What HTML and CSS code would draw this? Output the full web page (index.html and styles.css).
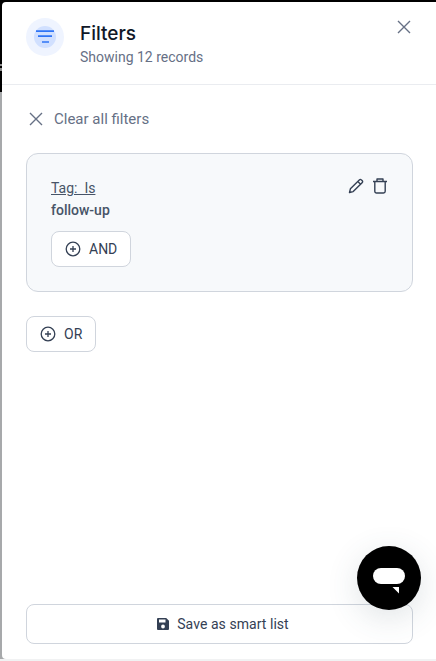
FILE: index.html
```html
<!DOCTYPE html>
<html lang="en">
<head>
<meta charset="utf-8">
<title>Filters</title>
<link rel="stylesheet" href="styles.css">
</head>
<body>
<aside class="panel">
  <header class="head">
    <div class="badge">
      <div class="badge-inner">
        <svg width="18" height="14" viewBox="0 0 18 14" fill="none" stroke="#2f74f6" stroke-width="1.7"><path d="M0 1.2h18M2 6.2h14M6 12h7"/></svg>
      </div>
    </div>
    <div class="titles">
      <h1 class="title">Filters</h1>
      <p class="subtitle">Showing 12 records</p>
    </div>
    <button class="close" aria-label="Close">
      <svg width="14" height="14" viewBox="0 0 14 14" fill="none" stroke="#667085" stroke-width="1.4"><path d="M1 1l12 12M13 1L1 13"/></svg>
    </button>
  </header>
  <main class="body">
    <button class="clear">
      <svg width="14" height="14" viewBox="0 0 14 14" fill="none" stroke="#667085" stroke-width="1.4"><path d="M1 1l12 12M13 1L1 13"/></svg>
      <span>Clear all filters</span>
    </button>
    <section class="group">
      <div class="cond">
        <div class="cond-text">
          <a class="cond-label" href="#">Tag:&nbsp; Is</a>
          <div class="cond-value">follow-up</div>
        </div>
        <div class="cond-actions">
          <svg width="16" height="16" viewBox="0 0 16 16" fill="none" stroke="#344054" stroke-width="1.4" stroke-linejoin="round"><path d="M1.5 14.5l.9-3.7L11.3 1.9a1.5 1.5 0 0 1 2.1 0l.7.7a1.5 1.5 0 0 1 0 2.1L5.2 13.6zM9.8 3.4l2.8 2.8"/></svg>
          <svg width="14" height="16" viewBox="0 0 14 16" fill="none" stroke="#344054" stroke-width="1.4" stroke-linejoin="round"><path d="M0 3.5h14M4 3.5V1h6v2.5M1.8 3.500v9.800a1.700 1.700 0 0 0 1.700 1.700h7a1.700 1.700 0 0 0 1.700-1.700V3.500"/></svg>
        </div>
      </div>
      <button class="btn btn-and">
        <svg width="16" height="16" viewBox="0 0 16 16" fill="none" stroke="#344054" stroke-width="1.3"><circle cx="8" cy="8" r="6.8"/><path d="M8 5v6M5 8h6"/></svg>
        <span>AND</span>
      </button>
    </section>
    <button class="btn btn-or">
      <svg width="16" height="16" viewBox="0 0 16 16" fill="none" stroke="#344054" stroke-width="1.3"><circle cx="8" cy="8" r="6.8"/><path d="M8 5v6M5 8h6"/></svg>
      <span>OR</span>
    </button>
  </main>
  <footer class="foot">
    <button class="save">
      <svg width="14" height="14" viewBox="0 0 14 14"><path fill="#344054" fill-rule="evenodd" d="M2 1h8.200L13 3.800V12a1 1 0 0 1-1 1H2a1 1 0 0 1-1-1V2a1 1 0 0 1 1-1zm1 1.600v2.800h6.500V2.600zM7 7.600a1.900 1.900 0 1 0 0 3.800 1.900 1.900 0 0 0 0-3.800z"/></svg>
      <span>Save as smart list</span>
    </button>
  </footer>
  <button class="chat" aria-label="Chat">
    <svg width="32" height="32" viewBox="0 0 32 32"><rect x="0" y="6" width="32" height="16" rx="8" fill="#fff"/><path d="M19.500 25h6.500v6.500z" fill="#fff"/></svg>
  </button>
</aside>
</body>
</html>
```
FILE: styles.css
```css
* { box-sizing: border-box; }
html, body { height: 100%; }
body {
  margin: 0;
  padding: 2px 0 2px 2px;
  background: linear-gradient(#000 0 64px, #8a8a8a 64px 66px, #000 66px 68px, #8a8a8a 68px 71px, #000 71px 92px, #a7a9ab 92px 100%);
  background-repeat: no-repeat;
  overflow: hidden;
  font-family: Roboto, "Liberation Sans", sans-serif;
  position: relative;
}
body::after {
  content: "";
  position: absolute;
  left: 0;
  right: 0;
  bottom: 0;
  height: 2px;
  background: #f1f2f3;
}
.panel {
  height: 100%;
  background: #fff;
  border-radius: 4px 0 0 4px;
  display: flex;
  flex-direction: column;
  position: relative;
}
button { font-family: inherit; cursor: pointer; }
.head {
  height: 83px;
  flex: none;
  border-bottom: 1px solid #eaecf0;
  display: flex;
  align-items: flex-start;
  padding: 16px 24px;
  gap: 16px;
}
.badge {
  width: 38px;
  height: 38px;
  border-radius: 50%;
  background: #eff4ff;
  display: flex;
  align-items: center;
  justify-content: center;
  flex: none;
}
.badge-inner {
  width: 22px;
  height: 22px;
  border-radius: 50%;
  background: #d1e0ff;
  display: flex;
  align-items: center;
  justify-content: center;
  overflow: visible;
}
.badge-inner svg { flex: none; }
.titles { flex: 1; padding-top: 4px; }
.title {
  margin: 0;
  font: 500 19px/24px Inter, sans-serif;
  color: #101828;
}
.subtitle {
  margin: 2px 0 0;
  font-size: 14px;
  line-height: 18px;
  color: #667085;
}
.close {
  border: 0;
  background: none;
  padding: 0;
  margin: 2px 1px 0 0;
  line-height: 0;
}
.body { flex: 1; padding: 0 23px 0 24px; display: flex; flex-direction: column; align-items: flex-start; }
.clear {
  border: 0;
  background: none;
  padding: 0 0 0 3px;
  margin-top: 25px;
  height: 18px;
  display: flex;
  align-items: center;
  gap: 11px;
  font-size: 15px;
  font-weight: 400;
  color: #667085;
}
.group {
  margin-top: 25px;
  width: 100%;
  height: 139px;
  border: 1px solid #d0d5dd;
  border-radius: 12px;
  background: #f7f9fb;
  padding: 24px;
}
.cond { display: flex; justify-content: space-between; align-items: flex-start; }
.cond-label {
  display: block;
  font-size: 14px;
  line-height: 20px;
  color: #475467;
  text-decoration: underline;
}
.cond-value {
  margin-top: 2px;
  font-size: 14px;
  line-height: 20px;
  font-weight: 500;
  color: #475467;
}
.cond-actions { display: flex; gap: 9px; align-items: center; margin-right: 1px; }
.btn {
  display: flex;
  align-items: center;
  height: 36px;
  gap: 8px;
  background: #fff;
  border: 1px solid #d0d5dd;
  border-radius: 8px;
  font-size: 14px;
  font-weight: 400;
  color: #344054;
  padding: 0 12px 0 13px;
}
.btn-and { margin-top: 11px; width: 80px; }
.btn-or { margin-top: 24px; width: 70px; }
.foot { padding: 0 23px 15px 24px; flex: none; }
.save {
  width: 100%;
  height: 40px;
  background: #fff;
  border: 1px solid #d0d5dd;
  border-radius: 8px;
  display: flex;
  align-items: center;
  justify-content: center;
  gap: 7px;
  padding-left: 12px;
  font-size: 14px;
  font-weight: 400;
  letter-spacing: .05px;
  color: #344054;
}
.chat {
  position: absolute;
  left: 355px;
  top: 544px;
  width: 64px;
  height: 64px;
  border-radius: 50%;
  border: 0;
  padding: 0;
  background: #000;
  box-shadow: 0 8px 32px rgba(60, 90, 100, .16);
  display: flex;
  align-items: center;
  justify-content: center;
}
```
